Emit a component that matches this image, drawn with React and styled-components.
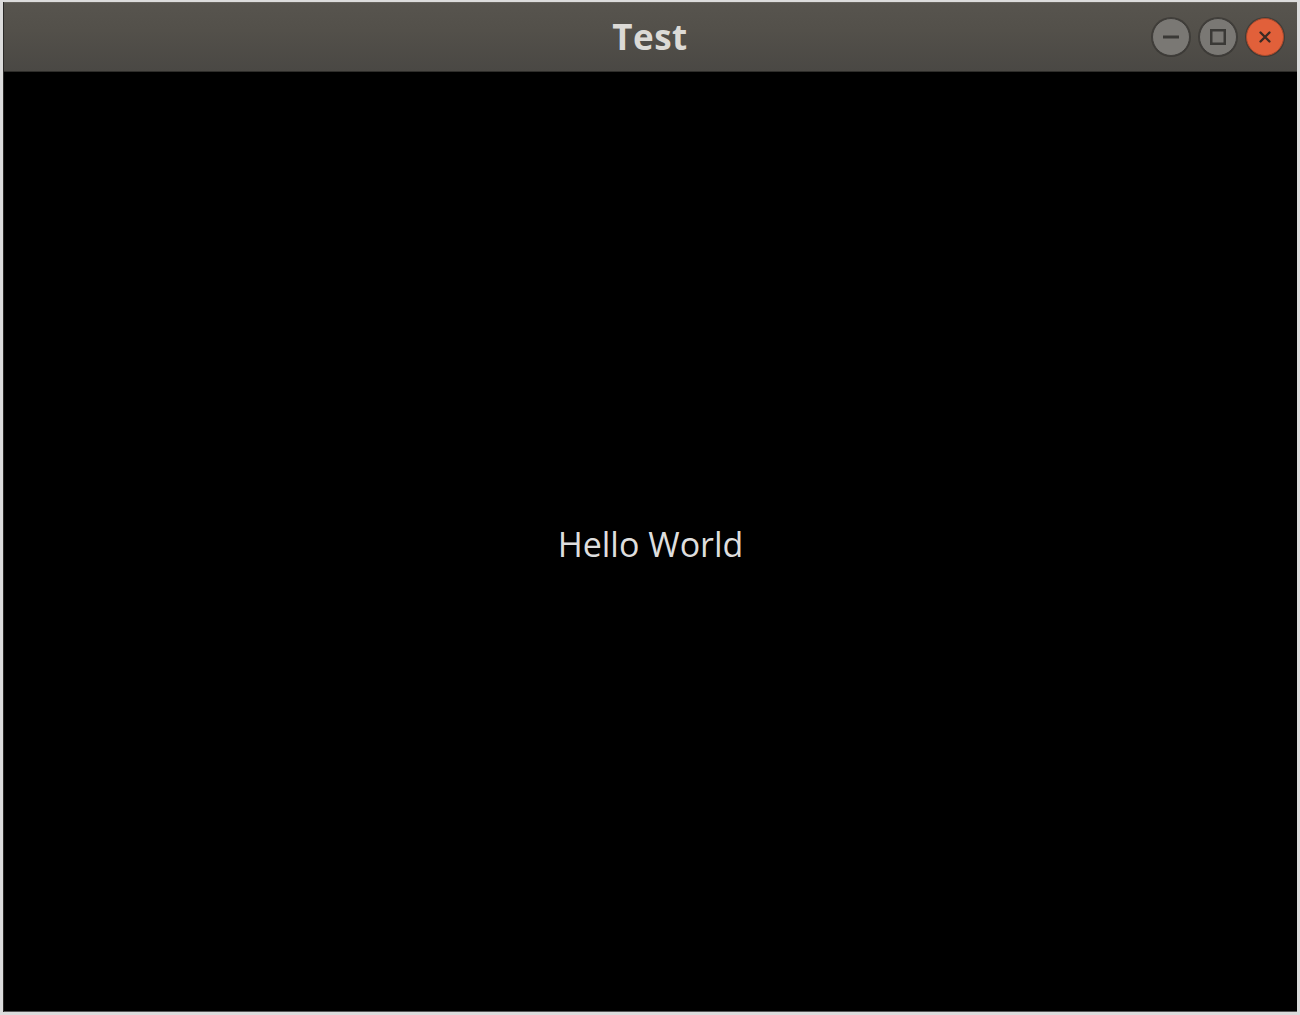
import React from 'react';
import styled, { createGlobalStyle } from 'styled-components';

const GlobalStyle = createGlobalStyle`
    html, body {
        margin: 0;
        padding: 0;
        background: #dcdcdc;
    }
`;

const Desktop = styled.div`
    width: 1300px;
    height: 1015px;
    box-sizing: border-box;
    padding: 2px 3px 3px 3px;
    background: #dcdcdc;
    display: flex;
`;

const Window = styled.div`
    flex: 1;
    display: flex;
    flex-direction: column;
    border-left: 1px solid #2a2927;
    background: #000;
`;

const TitleBar = styled.div`
    height: 70px;
    box-sizing: border-box;
    display: grid;
    grid-template-columns: 1fr auto 1fr;
    align-items: center;
    padding: 0 13px 0 12px;
    background: linear-gradient(#57544e 0%, #53504a 40%, #4a4844 100%);
    border-top: 1px solid #66635d;
    border-bottom: 1px solid #2e2d2a;
`;

const Title = styled.div`
    grid-column: 2;
    font-family: "Open Sans", "Liberation Sans", sans-serif;
    font-weight: 700;
    font-size: 35px;
    color: #dcdad6;
    letter-spacing: 0.5px;
    padding-bottom: 2px;
`;

const Controls = styled.div`
    grid-column: 3;
    justify-self: end;
    display: flex;
    gap: 9px;
`;

const CircleButton = styled.div`
    width: 38px;
    height: 38px;
    border-radius: 50%;
    box-sizing: border-box;
    display: flex;
    align-items: center;
    justify-content: center;
    background: ${p => (p.$close ? '#e1603a' : '#7a7874')};
    border: 1px solid ${p => (p.$close ? '#a9492c' : '#3f3d3a')};
    box-shadow: 0 0 0 1px rgba(40, 38, 36, 0.45);
`;

const Content = styled.main`
    flex: 1;
    background: #000;
    display: flex;
    align-items: center;
    justify-content: center;
    border-bottom: 1px solid #555;
`;

const Greeting = styled.div`
    font-family: "Open Sans", "Liberation Sans", sans-serif;
    font-size: 34px;
    color: #dedede;
    margin-top: 4px;
`;

function App() {
    return (
        <>
            <GlobalStyle />
            <Desktop>
                <Window>
                    <TitleBar>
                        <Title>Test</Title>
                        <Controls>
                            <CircleButton>
                                <svg width="16" height="4" viewBox="0 0 16 4">
                                    <rect x="0" y="0.5" width="16" height="3" fill="#3a3936" />
                                </svg>
                            </CircleButton>
                            <CircleButton>
                                <svg width="16" height="16" viewBox="0 0 16 16">
                                    <rect x="1.25" y="1.25" width="13.5" height="13.5" fill="none" stroke="#3a3936" strokeWidth="2.5" />
                                </svg>
                            </CircleButton>
                            <CircleButton $close>
                                <svg width="14" height="14" viewBox="0 0 14 14">
                                    <path d="M2.5 2.5 L11.5 11.5 M11.5 2.5 L2.5 11.5" stroke="#3a2a24" strokeWidth="2.4" strokeLinecap="round" />
                                </svg>
                            </CircleButton>
                        </Controls>
                    </TitleBar>
                    <Content>
                        <Greeting>Hello World</Greeting>
                    </Content>
                </Window>
            </Desktop>
        </>
    );
}

export default App;
